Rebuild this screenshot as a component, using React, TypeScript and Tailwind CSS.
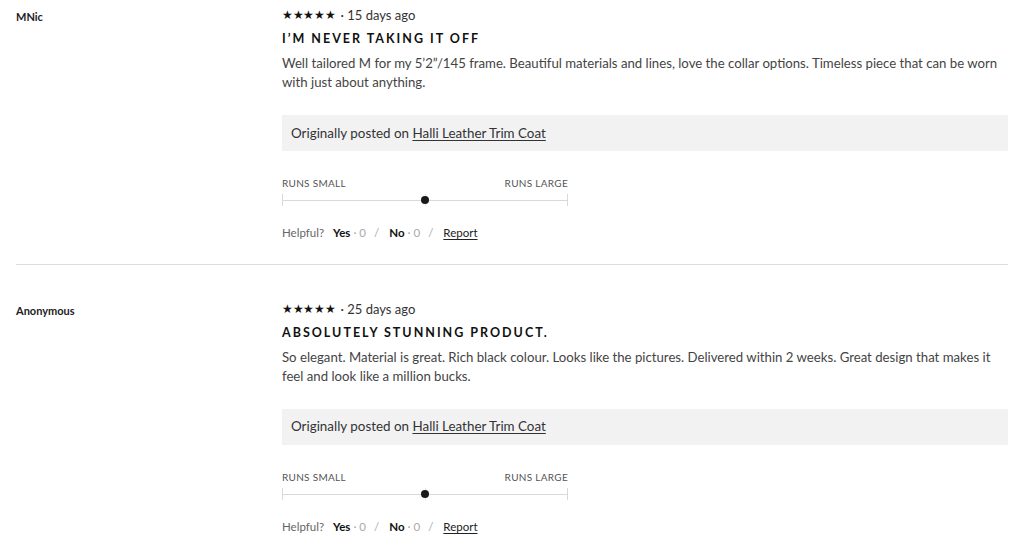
import React from "react";

type Review = { name: string; ago: string; title: string; body: string; product: string };

const reviews: Review[] = [
  {
    name: "MNic",
    ago: "15 days ago",
    title: "I’m never taking it off",
    body: "Well tailored M for my 5’2”/145 frame. Beautiful materials and lines, love the collar options. Timeless piece that can be worn with just about anything.",
    product: "Halli Leather Trim Coat",
  },
  {
    name: "Anonymous",
    ago: "25 days ago",
    title: "Absolutely stunning product.",
    body: "So elegant. Material is great. Rich black colour. Looks like the pictures. Delivered within 2 weeks. Great design that makes it feel and look like a million bucks.",
    product: "Halli Leather Trim Coat",
  },
];

function FitSlider() {
  return (
    <div className="w-[286px]">
      <div className="flex justify-between text-[10px] uppercase tracking-[0.03em] text-[#555] leading-none">
        <span>Runs Small</span>
        <span>Runs Large</span>
      </div>
      <div className="relative mt-[6px] h-[12px]">
        <div className="absolute left-0 right-0 top-[6px] h-px bg-[#d9d9d9]" />
        <div className="absolute left-0 top-0 h-[12px] w-px bg-[#d9d9d9]" />
        <div className="absolute right-0 top-0 h-[12px] w-px bg-[#d9d9d9]" />
        <div className="absolute left-[143px] top-0 h-[12px] w-px bg-[#e6e6e6]" />
        <div className="absolute left-[139px] top-[2px] h-[8px] w-[8px] rounded-full bg-[#1a1a1a]" />
      </div>
    </div>
  );
}

function ReviewItem({ r }: { r: Review }) {
  return (
    <div className="flex">
      <div className="w-[266px] shrink-0 pt-[3px] text-[11px] font-bold text-[#222]">{r.name}</div>
      <div className="flex-1">
        <div className="flex items-center text-[13px] leading-[18px] text-[#333]">
          <span className="text-[11.5px] tracking-[-0.3px] text-[#111]">★★★★★</span>
          <span className="ml-[5px]">· {r.ago}</span>
        </div>
        <h3 className="mt-[6px] text-[12.5px] font-bold uppercase tracking-[0.16em] leading-[18px] text-[#111]">{r.title}</h3>
        <p className="mt-[6px] text-[13.2px] leading-[19px] text-[#444] pr-[10px]">{r.body}</p>
        <div className="mt-[23px] flex h-[36px] items-center bg-[#f2f2f3] px-[9px] text-[13.4px] text-[#333]">
          Originally posted on&nbsp;<span className="underline underline-offset-2">{r.product}</span>
        </div>
        <div className="mt-[27px]">
          <FitSlider />
        </div>
        <div className="mt-[21px] flex items-center text-[11.5px] text-[#666] leading-none">
          <span>Helpful?</span>
          <span className="ml-[9px] font-bold text-[#111]">Yes</span>
          <span className="ml-[3px] text-[#aaa]">· 0</span>
          <span className="mx-[8px] text-[#aaa]">/</span>
          <span className="ml-[2px] font-bold text-[#111]">No</span>
          <span className="ml-[3px] text-[#aaa]">· 0</span>
          <span className="mx-[8px] text-[#aaa]">/</span>
          <span className="ml-[2px] underline underline-offset-2 text-[#222]">Report</span>
        </div>
      </div>
    </div>
  );
}

export default function App() {
  return (
    <div className="min-h-[546px] bg-white px-4 pt-[6px]" style={{ fontFamily: "Lato, 'Noto Sans', sans-serif" }}>
      <ReviewItem r={reviews[0]} />
      <div className="mt-[25px] h-px bg-[#dcdcdc]" />
      <div className="mt-[35px]">
        <ReviewItem r={reviews[1]} />
      </div>
    </div>
  );
}
